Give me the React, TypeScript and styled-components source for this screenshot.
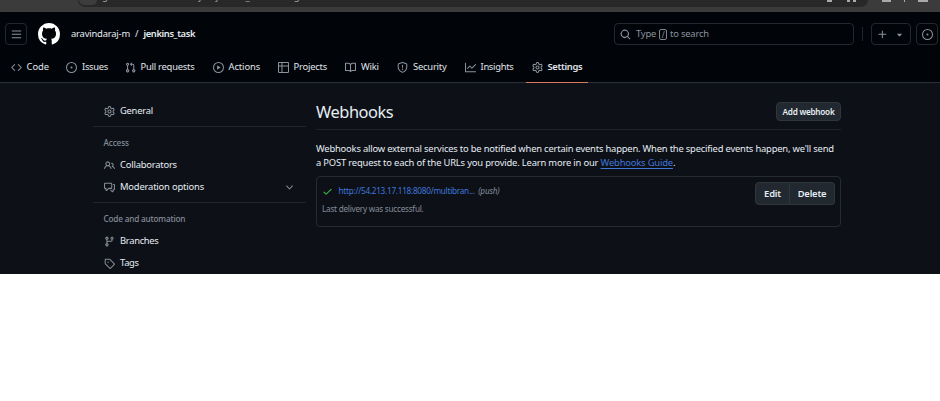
import React from "react";
import styled, { createGlobalStyle, css } from "styled-components";

const Global = createGlobalStyle`
  * { box-sizing: border-box; }
  body { margin: 0; background: #fff; }
`;

const Page = styled.div`
  width: 940px;
  height: 401px;
  background: #fff;
  color: #e6edf3;
  font: 9.4px/14px "Noto Sans", "Open Sans", sans-serif;
  overflow: hidden;
`;

const Shot = styled.div`
  height: 274px;
  background: #0d1017;
  overflow: hidden;
`;

const Label = styled.span<{ $ls?: number; $weight?: number }>`
  white-space: nowrap;
  letter-spacing: ${(p) => p.$ls ?? 0}px;
  font-weight: ${(p) => p.$weight ?? 400};
`;

const Chrome = styled.div`
  height: 12px;
  background: #3b3b3c;
  display: flex;
  align-items: flex-start;
  padding-left: 78px;
  overflow: hidden;
`;

const UrlPill = styled.div`
  width: 790px;
  height: 7px;
  border-radius: 0 0 9px 9px;
  background: #282828;
  display: flex;
  align-items: flex-end;
  overflow: hidden;
  color: #a5a5a5;
`;

const SiteInfo = styled.span`
  width: 18px;
  height: 5px;
  margin: 0 5px 2px 1px;
  border-radius: 0 0 9px 9px;
  background: #3d3d3e;
`;

const UrlText = styled(Label)`
  line-height: 12px;
  height: 12px;
  margin-bottom: 4px;
`;

const ChromeMark = styled.span<{ $w: number; $gap: number }>`
  width: ${(p) => p.$w}px;
  height: 1.5px;
  margin-left: ${(p) => p.$gap}px;
  background: #a9a9a9;
`;

const PillMarks = styled.span`
  display: flex;
  height: 7px;
  margin-left: auto;
  padding-right: 12px;
`;

const Header = styled.header`
  height: 71px;
  background: #010409;
  border-bottom: 1px solid #2a3038;
`;

const TopRow = styled.div`
  height: 44px;
  padding-left: 5px;
  display: flex;
  align-items: center;
`;

const outline = css`
  border: 1px solid #24282e;
  border-radius: 4px;
  height: 22px;
  display: flex;
  align-items: center;
  color: #8b929b;
`;

const IconBox = styled.button<{ $w: number; $before?: number }>`
  ${outline}
  width: ${(p) => p.$w}px;
  margin: 0 0 0 ${(p) => p.$before ?? 0}px;
  background: none;
  padding: 0;
  justify-content: center;
  gap: 6px;
  flex: none;
`;

const Logo = styled.span`
  display: flex;
  margin: 0 11px;
  color: #fff;
`;

const Crumbs = styled.div`
  display: flex;
  gap: 5px;
  width: 543px;
  flex: none;
`;

const Search = styled.div`
  ${outline}
  width: 240px;
  flex: none;
  padding-left: 5px;
  gap: 5px;
`;

const Key = styled.kbd`
  display: inline-flex;
  justify-content: center;
  align-items: center;
  width: 8px;
  height: 11px;
  margin: 0 3px;
  border: 1px solid #7d848d;
  border-radius: 2px;
  font: 8px/9px "Noto Sans", sans-serif;
  vertical-align: -1px;
`;

const Divider = styled.span`
  width: 1px;
  height: 14px;
  margin: 0 8px;
  background: #20242a;
`;

const Nav = styled.nav`
  height: 27px;
  display: flex;
  padding-left: 5px;
`;

const Tab = styled.a<{ $w: number; $active?: boolean }>`
  width: ${(p) => p.$w}px;
  height: 27px;
  padding: 0 0 4px 5.5px;
  display: flex;
  align-items: center;
  gap: 5px;
  color: #e0e5eb;
  border-bottom: 1.5px solid ${(p) => (p.$active ? "#d67a62" : "transparent")};
  & svg { color: #8b929b; flex: none; }
`;

const Body = styled.div`
  display: flex;
  padding-left: 93px;
`;

const Sidebar = styled.aside`
  width: 213px;
  padding-top: 17px;
`;

const Item = styled.a`
  height: 22px;
  padding: 0 11px 0 10.5px;
  display: flex;
  align-items: center;
  gap: 5.5px;
  & svg { color: #868d96; }
  & > :nth-child(3) { margin-left: auto; }
`;

const Group = styled.section`
  margin-top: 4px;
  padding-top: 6px;
  border-top: 1px solid #21262d;
`;

const GroupTitle = styled.h3`
  margin: 0;
  padding-left: 10.5px;
  height: 21px;
  font-size: 8.2px;
  line-height: 20px;
  color: #858d97;
`;

const Main = styled.main`
  width: 525px;
  margin-left: 10px;
  padding-top: 16px;
`;

const Heading = styled.div`
  height: 31px;
  display: flex;
  align-items: flex-start;
  justify-content: space-between;
  border-bottom: 1px solid #1e232a;
`;

const Title = styled.h2`
  margin: 0;
  font-size: 16.4px;
  line-height: 26px;
  font-weight: 400;
`;

const Button = styled.button<{ $w: number; $h: number; $size: number }>`
  width: ${(p) => p.$w}px;
  height: ${(p) => p.$h}px;
  padding: 0;
  margin-top: 3px;
  border: 1px solid #30363d;
  border-radius: 4px;
  background: #212830;
  color: #e6edf3;
  font: 600 ${(p) => p.$size}px/14px "Noto Sans", sans-serif;
`;

const ButtonGroup = styled.div`
  display: flex;
  & > * { margin: 0; }
  & > :first-child { border-radius: 4px 0 0 4px; }
  & > :last-child { border-radius: 0 4px 4px 0; border-left: 0; }
`;

const Intro = styled.p`
  margin: 12px 0 6px;
  display: flex;
  flex-direction: column;
`;

const Link = styled.a<{ $underline?: boolean }>`
  color: #4078dc;
  ${(p) => p.$underline && "text-decoration: underline; text-underline-offset: 2px;"}
`;

const Card = styled.div`
  height: 51px;
  border: 1px solid #262b32;
  border-radius: 4px;
  display: flex;
  justify-content: space-between;
  padding: 5px 5px 0;
`;

const Hook = styled.div`
  font-size: 8.2px;
  color: #858d97;
`;

const HookLine = styled.div`
  display: flex;
  align-items: center;
  height: 18px;
  gap: 5.5px;
  & svg { color: #3fb950; }
  & em { margin-left: -2px; }
`;

const Ico = ({ d, s = 11 }: { d: string; s?: number }) => (
  <svg width={s} height={s} viewBox="0 0 16 16" fill="currentColor" aria-hidden>
    <path d={d} />
  </svg>
);

const I = {
  bars: "M1 2.75A.75.75 0 0 1 1.75 2h12.5a.75.75 0 0 1 0 1.5H1.75A.75.75 0 0 1 1 2.75Zm0 5A.75.75 0 0 1 1.75 7h12.5a.75.75 0 0 1 0 1.5H1.75A.75.75 0 0 1 1 7.75ZM1.75 12h12.5a.75.75 0 0 1 0 1.5H1.75a.75.75 0 0 1 0-1.5Z",
  github: "M8 0c4.42 0 8 3.58 8 8a8.013 8.013 0 0 1-5.45 7.59c-.4.08-.55-.17-.55-.38 0-.27.01-1.13.01-2.2 0-.75-.25-1.23-.54-1.48 1.78-.2 3.65-.88 3.65-3.95 0-.88-.31-1.59-.82-2.15.08-.2.36-1.02-.08-2.12 0 0-.67-.22-2.2.82-.64-.18-1.32-.27-2-.27-.68 0-1.36.09-2 .27-1.53-1.03-2.2-.82-2.2-.82-.44 1.1-.16 1.92-.08 2.12-.51.56-.82 1.28-.82 2.15 0 3.06 1.86 3.75 3.64 3.95-.23.2-.44.55-.51 1.07-.46.21-1.61.55-2.33-.66-.15-.24-.6-.83-1.23-.82-.67.01-.27.38.01.53.34.19.73.9.82 1.13.16.45.68 1.31 2.69.94 0 .67.01 1.3.01 1.49 0 .21-.15.45-.55.38A7.995 7.995 0 0 1 0 8c0-4.42 3.58-8 8-8Z",
  search: "M10.68 11.74a6 6 0 0 1-7.922-8.982 6 6 0 0 1 8.982 7.922l3.04 3.04a.749.749 0 0 1-1.06 1.06ZM11.5 7a4.499 4.499 0 1 0-8.997 0A4.499 4.499 0 0 0 11.5 7Z",
  plus: "M7.75 2a.75.75 0 0 1 .75.75V7h4.25a.75.75 0 0 1 0 1.5H8.5v4.25a.75.75 0 0 1-1.5 0V8.5H2.75a.75.75 0 0 1 0-1.5H7V2.75A.75.75 0 0 1 7.75 2Z",
  tri: "m4.427 7.427 3.396 3.396a.25.25 0 0 0 .354 0l3.396-3.396A.25.25 0 0 0 11.396 7H4.604a.25.25 0 0 0-.177.427Z",
  issue: "M8 9.5a1.5 1.5 0 1 0 0-3 1.5 1.5 0 0 0 0 3ZM8 0a8 8 0 1 1 0 16A8 8 0 0 1 8 0ZM1.5 8a6.5 6.5 0 1 0 13 0 6.5 6.5 0 0 0-13 0Z",
  code: "m11.28 3.22 4.25 4.25a.75.75 0 0 1 0 1.06l-4.25 4.25a.749.749 0 0 1-1.06-1.06L13.94 8l-3.72-3.72a.749.749 0 0 1 1.06-1.06Zm-6.56 0a.751.751 0 0 1 1.06 1.06L2.06 8l3.72 3.72a.749.749 0 0 1-1.06 1.06L.47 8.53a.75.75 0 0 1 0-1.06Z",
  pr: "M1.5 3.25a2.25 2.25 0 1 1 3 2.122v5.256a2.251 2.251 0 1 1-1.5 0V5.372A2.25 2.25 0 0 1 1.5 3.25Zm5.677-.177L9.573.677A.25.25 0 0 1 10 .854V2.5h1A2.5 2.5 0 0 1 13.5 5v5.628a2.251 2.251 0 1 1-1.5 0V5a1 1 0 0 0-1-1h-1v1.646a.25.25 0 0 1-.427.177L7.177 3.427a.25.25 0 0 1 0-.354ZM3.75 2.5a.75.75 0 1 0 0 1.5.75.75 0 0 0 0-1.5Zm0 9.5a.75.75 0 1 0 0 1.5.75.75 0 0 0 0-1.5Zm8.25.75a.75.75 0 1 0 1.5 0 .75.75 0 0 0-1.5 0Z",
  play: "M8 0a8 8 0 1 1 0 16A8 8 0 0 1 8 0ZM1.5 8a6.5 6.5 0 1 0 13 0 6.5 6.5 0 0 0-13 0Zm4.879-2.773 4.264 2.559a.25.25 0 0 1 0 .428l-4.264 2.559A.25.25 0 0 1 6 10.559V5.442a.25.25 0 0 1 .379-.215Z",
  table: "M0 1.75C0 .784.784 0 1.75 0h12.5C15.216 0 16 .784 16 1.75v12.5A1.75 1.75 0 0 1 14.25 16H1.75A1.75 1.75 0 0 1 0 14.25ZM6.5 6.5v8h7.75a.25.25 0 0 0 .25-.25V6.5Zm8-1.5V1.75a.25.25 0 0 0-.25-.25H6.5V5Zm-13 1.5v7.75c0 .138.112.25.25.25H5v-8ZM5 5V1.5H1.75a.25.25 0 0 0-.25.25V5Z",
  book: "M0 1.75A.75.75 0 0 1 .75 1h4.253c1.227 0 2.317.59 3 1.501A3.743 3.743 0 0 1 11.006 1h4.245a.75.75 0 0 1 .75.75v10.5a.75.75 0 0 1-.75.75h-4.507a2.25 2.25 0 0 0-1.591.659l-.622.621a.75.75 0 0 1-1.06 0l-.622-.621A2.25 2.25 0 0 0 5.258 13H.75a.75.75 0 0 1-.75-.75Zm7.251 10.324.004-5.073-.002-2.253A2.25 2.25 0 0 0 5.003 2.5H1.5v9h3.757a3.75 3.75 0 0 1 1.994.574ZM8.755 4.75l-.004 7.322a3.752 3.752 0 0 1 1.992-.572H14.5v-9h-3.495a2.25 2.25 0 0 0-2.25 2.25Z",
  shield: "M7.467.133a1.748 1.748 0 0 1 1.066 0l5.25 1.68A1.75 1.75 0 0 1 15 3.48V7c0 1.566-.32 3.182-1.303 4.682-.983 1.498-2.585 2.813-5.032 3.855a1.697 1.697 0 0 1-1.33 0c-2.447-1.042-4.049-2.357-5.032-3.855C1.32 10.182 1 8.566 1 7V3.48a1.75 1.75 0 0 1 1.217-1.667Zm.61 1.429a.25.25 0 0 0-.153 0l-5.25 1.68a.25.25 0 0 0-.174.238V7c0 1.358.275 2.666 1.057 3.86.784 1.194 2.121 2.34 4.366 3.297a.196.196 0 0 0 .154 0c2.245-.956 3.582-2.104 4.366-3.298C13.225 9.666 13.5 8.36 13.5 7V3.48a.251.251 0 0 0-.174-.237l-5.25-1.68ZM8.75 4.75v3a.75.75 0 0 1-1.5 0v-3a.75.75 0 0 1 1.5 0ZM9 10.5a1 1 0 1 1-2 0 1 1 0 0 1 2 0Z",
  graph: "M1.5 1.75V13.5h13.75a.75.75 0 0 1 0 1.5H.75a.75.75 0 0 1-.75-.75V1.75a.75.75 0 0 1 1.5 0Zm14.28 2.53-5.25 5.25a.75.75 0 0 1-1.06 0L7 7.06 4.28 9.78a.751.751 0 0 1-1.06-1.06l3.25-3.25a.75.75 0 0 1 1.06 0L10 7.94l4.72-4.72a.751.751 0 0 1 1.06 1.06Z",
  gear: "M8 0a8.2 8.2 0 0 1 .701.031C9.444.095 9.99.645 10.16 1.29l.288 1.107c.018.066.079.158.212.224.231.114.454.243.668.386.123.082.233.09.299.071l1.103-.303c.644-.176 1.392.021 1.82.63.27.385.506.792.704 1.218.315.675.111 1.422-.364 1.891l-.814.806c-.049.048-.098.147-.088.294.016.257.016.515 0 .772-.01.147.038.246.088.294l.814.806c.475.469.679 1.216.364 1.891a7.977 7.977 0 0 1-.704 1.217c-.428.61-1.176.807-1.82.63l-1.102-.302c-.067-.019-.177-.011-.3.071a5.909 5.909 0 0 1-.668.386c-.133.066-.194.158-.211.224l-.29 1.106c-.168.646-.715 1.196-1.458 1.26a8.006 8.006 0 0 1-1.402 0c-.743-.064-1.289-.614-1.458-1.26l-.289-1.106c-.018-.066-.079-.158-.212-.224a5.738 5.738 0 0 1-.668-.386c-.123-.082-.233-.09-.299-.071l-1.103.303c-.644.176-1.392-.021-1.82-.63a8.12 8.12 0 0 1-.704-1.218c-.315-.675-.111-1.422.363-1.891l.815-.806c.05-.048.098-.147.088-.294a6.214 6.214 0 0 1 0-.772c.01-.147-.038-.246-.088-.294l-.815-.806C.635 6.045.431 5.298.746 4.623a7.92 7.92 0 0 1 .704-1.217c.428-.61 1.176-.807 1.82-.63l1.102.302c.067.019.177.011.3-.071.214-.143.437-.272.668-.386.133-.066.194-.158.211-.224l.29-1.106C6.009.645 6.556.095 7.299.03 7.53.01 7.764 0 8 0Zm-.571 1.525c-.036.003-.108.036-.137.146l-.289 1.105c-.147.561-.549.967-.998 1.189-.173.086-.34.183-.5.29-.417.278-.97.423-1.529.27l-1.103-.303c-.109-.03-.175.016-.195.045-.22.312-.412.644-.573.99-.014.031-.021.11.059.19l.815.806c.411.406.562.957.53 1.456a4.709 4.709 0 0 0 0 .582c.032.499-.119 1.05-.53 1.456l-.815.806c-.081.08-.073.159-.059.19.162.346.353.677.573.989.02.03.085.076.195.046l1.102-.303c.56-.153 1.113-.008 1.53.27.161.107.328.204.501.29.447.222.85.629.997 1.189l.289 1.105c.029.109.101.143.137.146a6.6 6.6 0 0 0 1.142 0c.036-.003.108-.036.137-.146l.289-1.105c.147-.561.549-.967.998-1.189.173-.086.34-.183.5-.29.417-.278.97-.423 1.529-.27l1.103.303c.109.029.175-.016.195-.045.22-.313.411-.644.573-.99.014-.031.021-.11-.059-.19l-.815-.806c-.411-.406-.562-.957-.53-1.456a4.709 4.709 0 0 0 0-.582c-.032-.499.119-1.05.53-1.456l.815-.806c.081-.08.073-.159.059-.19a6.464 6.464 0 0 0-.573-.989c-.02-.03-.085-.076-.195-.046l-1.102.303c-.56.153-1.113.008-1.53-.27a4.44 4.44 0 0 0-.501-.29c-.447-.222-.85-.629-.997-1.189l-.289-1.105c-.029-.11-.101-.143-.137-.146a6.6 6.6 0 0 0-1.142 0ZM11 8a3 3 0 1 1-6 0 3 3 0 0 1 6 0ZM9.5 8a1.5 1.5 0 1 0-3.001.001A1.5 1.5 0 0 0 9.5 8Z",
  people: "M2 5.5a3.5 3.5 0 1 1 5.898 2.549 5.508 5.508 0 0 1 3.034 4.084.75.75 0 1 1-1.482.235 4 4 0 0 0-7.9 0 .75.75 0 0 1-1.482-.236A5.507 5.507 0 0 1 3.102 8.05 3.493 3.493 0 0 1 2 5.5ZM11 4a3.001 3.001 0 0 1 2.22 5.018 5.01 5.01 0 0 1 2.56 3.012.749.749 0 0 1-.885.954.752.752 0 0 1-.549-.514 3.507 3.507 0 0 0-2.522-2.372.75.75 0 0 1-.574-.73v-.352a.75.75 0 0 1 .416-.672A1.5 1.5 0 0 0 11 5.5.75.75 0 0 1 11 4Zm-5.5-.5a2 2 0 1 0-.001 3.999A2 2 0 0 0 5.5 3.5Z",
  comments: "M1.75 1h8.5c.966 0 1.75.784 1.75 1.75v5.5A1.75 1.75 0 0 1 10.25 10H7.061l-2.574 2.573A1.458 1.458 0 0 1 2 11.543V10h-.25A1.75 1.75 0 0 1 0 8.25v-5.5C0 1.784.784 1 1.75 1ZM1.5 2.75v5.5c0 .138.112.25.25.25h1a.75.75 0 0 1 .75.75v2.19l2.72-2.72a.749.749 0 0 1 .53-.22h3.5a.25.25 0 0 0 .25-.25v-5.5a.25.25 0 0 0-.25-.25h-8.5a.25.25 0 0 0-.25.25Zm13 2a.25.25 0 0 0-.25-.25h-.5a.75.75 0 0 1 0-1.5h.5c.966 0 1.75.784 1.75 1.75v5.5A1.75 1.75 0 0 1 14.25 12H14v1.543a1.458 1.458 0 0 1-2.487 1.03L9.22 12.28a.749.749 0 0 1 1.06-1.06l2.22 2.22v-2.19a.75.75 0 0 1 .75-.75h1a.25.25 0 0 0 .25-.25Z",
  chevron: "M12.78 5.22a.749.749 0 0 1 0 1.06l-4.25 4.25a.749.749 0 0 1-1.06 0L3.22 6.28a.749.749 0 1 1 1.06-1.06L8 8.939l3.72-3.719a.749.749 0 0 1 1.06 0Z",
  branch: "M9.5 3.25a2.25 2.25 0 1 1 3 2.122V6A2.5 2.5 0 0 1 10 8.5H6a1 1 0 0 0-1 1v1.128a2.251 2.251 0 1 1-1.5 0V5.372a2.25 2.25 0 1 1 1.5 0v1.836A2.493 2.493 0 0 1 6 7h4a1 1 0 0 0 1-1v-.628A2.25 2.25 0 0 1 9.5 3.25Zm-6 0a.75.75 0 1 0 1.5 0 .75.75 0 0 0-1.5 0Zm8.25-.75a.75.75 0 1 0 0 1.5.75.75 0 0 0 0-1.5ZM4.25 12a.75.75 0 1 0 0 1.5.75.75 0 0 0 0-1.5Z",
  tag: "M1 7.775V2.75C1 1.784 1.784 1 2.75 1h5.025c.464 0 .91.184 1.238.513l6.25 6.25a1.75 1.75 0 0 1 0 2.474l-5.026 5.026a1.75 1.75 0 0 1-2.474 0l-6.25-6.25A1.752 1.752 0 0 1 1 7.775Zm1.5 0c0 .066.026.13.073.177l6.25 6.25a.25.25 0 0 0 .354 0l5.025-5.025a.25.25 0 0 0 0-.354l-6.25-6.25a.25.25 0 0 0-.177-.073H2.75a.25.25 0 0 0-.25.25ZM6 5a1 1 0 1 1 0 2 1 1 0 0 1 0-2Z",
  check: "M13.78 4.22a.75.75 0 0 1 0 1.06l-7.25 7.25a.75.75 0 0 1-1.06 0L2.22 9.28a.751.751 0 0 1 1.06-1.06L6 10.94l6.72-6.72a.75.75 0 0 1 1.06 0Z",
};

const tabs: { name: string; icon: string; width: number; ls: number }[] = [
  { name: "Code", icon: I.code, width: 55.5, ls: -0.05 },
  { name: "Issues", icon: I.issue, width: 58.5, ls: -0.3 },
  { name: "Pull requests", icon: I.pr, width: 88, ls: -0.23 },
  { name: "Actions", icon: I.play, width: 65, ls: -0.1 },
  { name: "Projects", icon: I.table, width: 67.5, ls: -0.2 },
  { name: "Wiki", icon: I.book, width: 52, ls: -0.2 },
  { name: "Security", icon: I.shield, width: 67.5, ls: -0.2 },
  { name: "Insights", icon: I.graph, width: 67, ls: -0.3 },
];

export default function App() {
  return (
    <Page>
      <Global />
      <Shot>
        <Chrome>
          <UrlPill>
            <SiteInfo />
            <UrlText $ls={-0.2}>github.com/aravindaraj-m/jenkins_task/settings/hooks</UrlText>
            <PillMarks>
              <ChromeMark $w={5} $gap={0} />
              <ChromeMark $w={3} $gap={15} />
              <ChromeMark $w={3} $gap={3} />
            </PillMarks>
          </UrlPill>
          <ChromeMark $w={9} $gap={14} />
          <ChromeMark $w={1} $gap={13} />
          <ChromeMark $w={10} $gap={13} />
        </Chrome>
        <Header>
          <TopRow>
            <IconBox $w={22}><Ico d={I.bars} /></IconBox>
            <Logo><Ico d={I.github} s={22} /></Logo>
            <Crumbs>
              <Label $ls={-0.18}>aravindaraj-m</Label>
              <Label>/</Label>
              <Label $ls={-0.4} $weight={600}>jenkins_task</Label>
            </Crumbs>
            <Search>
              <Ico d={I.search} />
              <Label $ls={-0.2}>Type<Key>/</Key>to search</Label>
            </Search>
            <Divider />
            <IconBox $w={40}><Ico d={I.plus} /><Ico d={I.tri} /></IconBox>
            <IconBox $w={22} $before={5}><Ico d={I.issue} /></IconBox>
          </TopRow>
          <Nav>
            {tabs.map((t) => (
              <Tab key={t.name} $w={t.width}>
                <Ico d={t.icon} />
                <Label $ls={t.ls}>{t.name}</Label>
              </Tab>
            ))}
            <Tab $w={62} $active>
              <Ico d={I.gear} />
              <Label $ls={-0.33} $weight={600}>Settings</Label>
            </Tab>
          </Nav>
        </Header>
        <Body>
          <Sidebar>
            <Item><Ico d={I.gear} /><Label $ls={-0.25}>General</Label></Item>
            <Group>
              <GroupTitle><Label $ls={-0.1} $weight={500}>Access</Label></GroupTitle>
              <Item><Ico d={I.people} /><Label $ls={-0.2}>Collaborators</Label></Item>
              <Item><Ico d={I.comments} /><Label $ls={-0.17}>Moderation options</Label><Ico d={I.chevron} /></Item>
            </Group>
            <Group>
              <GroupTitle><Label $ls={-0.17} $weight={500}>Code and automation</Label></GroupTitle>
              <Item><Ico d={I.branch} /><Label $ls={-0.3}>Branches</Label></Item>
              <Item><Ico d={I.tag} /><Label $ls={-0.3}>Tags</Label></Item>
            </Group>
          </Sidebar>
          <Main>
            <Heading>
              <Title><Label $ls={-0.45}>Webhooks</Label></Title>
              <Button $w={65} $h={19} $size={8.2}><Label $ls={-0.25} $weight={600}>Add webhook</Label></Button>
            </Heading>
            <Intro>
              <Label $ls={-0.19}>Webhooks allow external services to be notified when certain events happen. When the specified events happen, we'll send</Label>
              <Label $ls={-0.17}>a POST request to each of the URLs you provide. Learn more in our <Link $underline>Webhooks Guide</Link>.</Label>
            </Intro>
            <Card>
              <Hook>
                <HookLine>
                  <Ico d={I.check} />
                  <Link><Label $ls={-0.26}>http://54.213.17.118:8080/multibran...</Label></Link>
                  <em><Label $ls={-0.2}>(push)</Label></em>
                </HookLine>
                <HookLine><Label $ls={-0.25}>Last delivery was successful.</Label></HookLine>
              </Hook>
              <ButtonGroup>
                <Button $w={35} $h={23} $size={9.4}><Label $ls={-0.2} $weight={600}>Edit</Label></Button>
                <Button $w={45} $h={23} $size={9.4}><Label $ls={-0.2} $weight={600}>Delete</Label></Button>
              </ButtonGroup>
            </Card>
          </Main>
        </Body>
      </Shot>
    </Page>
  );
}
